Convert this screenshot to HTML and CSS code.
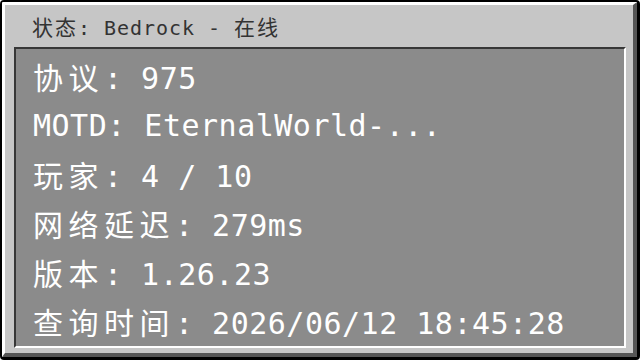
FILE: index.html
```html
<html>
<head>
  <meta charset="utf-8">
  <link rel="stylesheet" href="styles.css">
</head>
<body>

<div class="frame">
  <div class="bevel">
    <div class="title"><span class="cjk">状态</span>: Bedrock - <span class="cjk">在线</span></div>
    <div class="panel">
      <div class="row"><span class="cjk">协议</span>: 975</div>
      <div class="row">MOTD: EternalWorld-...</div>
      <div class="row"><span class="cjk">玩家</span>: 4 / 10</div>
      <div class="row"><span class="cjk">网络延迟</span>: 279ms</div>
      <div class="row"><span class="cjk">版本</span>: 1.26.23</div>
      <div class="row"><span class="cjk">查询时间</span>: 2026/06/12 18:45:28</div>
    </div>
  </div>
</div>

</body>
</html>
```

FILE: styles.css
```css
body{
  margin: 0;
  background: #fff;
  font-family: 'DejaVu Sans Mono', 'Noto Sans CJK SC', monospace;
}
.frame{
  width: 640px;
  height: 360px;
  box-sizing: border-box;
  border: 2px solid #000;
  border-right-width: 3px;
  border-bottom-width: 3px;
  border-radius: 4px;
  overflow: hidden;
}
.bevel{
  height: 100%;
  box-sizing: border-box;
  display: flex;
  flex-direction: column;
  background: #c6c6c6;
  border-style: solid;
  border-width: 3px 4px 4px 3px;
  border-color: #fff #555 #555 #fff;
  padding: 0 7px 7px 9px;
}

/* title bar */
.title{
  height: 42px;
  line-height: 42px;
  padding-left: 18px;
  font-size: 20px;
  letter-spacing: 0.96px;
  color: #333;
  white-space: pre;
}
.title .cjk{
  font-size: 21px;
  letter-spacing: 2px;
}

/* info panel */
.panel{
  flex: 1;
  background: #8b8b8b;
  border-style: solid;
  border-width: 2px;
  border-color: #373737 #fff #fff #373737;
  padding: 3px 0 0 17px;
  color: #fff;
}
.row{
  height: 49px;
  line-height: 49px;
  font-size: 30px;
  letter-spacing: 0.5px;
  white-space: pre;
}
.row .cjk{
  letter-spacing: 5.5px;
}
.cjk{
  font-family: 'Noto Sans CJK SC', sans-serif;
}
```
